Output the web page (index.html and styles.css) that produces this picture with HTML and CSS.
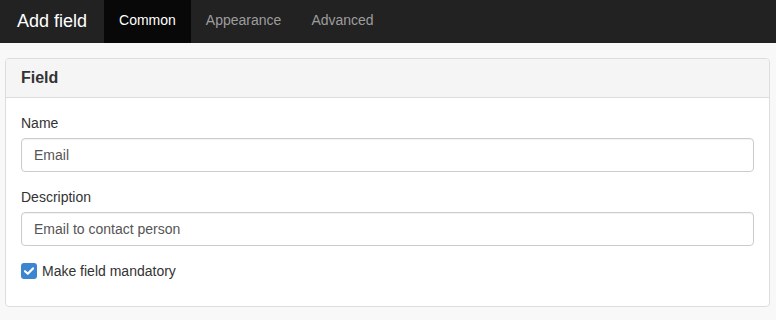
FILE: index.html
```html
<!DOCTYPE html>
<html>
<head>
<meta charset="utf-8">
<link rel="stylesheet" href="styles.css">
</head>
<body>
<nav class="navbar">
  <span class="brand">Add field</span>
  <ul class="tabs">
    <li class="tab active">Common</li>
    <li class="tab">Appearance</li>
    <li class="tab">Advanced</li>
  </ul>
</nav>
<main class="content">
  <section class="panel">
    <div class="panel-heading">Field</div>
    <div class="panel-body">
      <div class="group">
        <label class="label">Name</label>
        <div class="input">Email</div>
      </div>
      <div class="group">
        <label class="label">Description</label>
        <div class="input">Email to contact person</div>
      </div>
      <div class="check">
        <span class="box"><svg width="10" height="8" viewBox="0 0 10 8"><path d="M1 4.2 L3.8 6.8 L9 1.4" fill="none" stroke="#fff" stroke-width="2.2" stroke-linecap="round" stroke-linejoin="round"/></svg></span>
        <span class="check-label">Make field mandatory</span>
      </div>
    </div>
  </section>
</main>
</body>
</html>
```
FILE: styles.css
```css
* { box-sizing: border-box; }
html, body { margin: 0; padding: 0; }
body {
  background: #f8f8f8;
  font-family: "Liberation Sans", Arial, sans-serif;
  font-size: 14px;
  color: #333;
}
.navbar {
  height: 43px;
  background: #222;
  display: flex;
  align-items: stretch;
}
.brand {
  color: #fff;
  font-size: 18px;
  padding: 0 17px 1px 17px;
  display: flex;
  align-items: center;
}
.tabs {
  list-style: none;
  margin: 0;
  padding: 0;
  display: flex;
}
.tab {
  padding: 0 15px 4px 15px;
  display: flex;
  align-items: center;
  color: #9d9d9d;
  font-size: 14px;
}
.tab.active {
  background: #080808;
  color: #fff;
}
.content {
  padding: 15px 6px 0 5px;
}
.panel {
  background: #fff;
  border: 1px solid #ddd;
  border-radius: 4px;
}
.panel-heading {
  background: #f5f5f5;
  border-bottom: 1px solid #ddd;
  border-radius: 3px 3px 0 0;
  height: 39px;
  padding: 0 15px;
  font-size: 16px;
  font-weight: bold;
  color: #333;
  display: flex;
  align-items: center;
}
.panel-body {
  padding: 15px 15px 25px 15px;
}
.group {
  margin-bottom: 15px;
}
.label {
  display: block;
  line-height: 20px;
  margin-bottom: 5px;
}
.input {
  height: 34px;
  border: 1px solid #ccc;
  border-radius: 4px;
  padding: 0 12px;
  display: flex;
  align-items: center;
  color: #555;
  box-shadow: inset 0 1px 1px rgba(0,0,0,0.05);
}
.check {
  display: flex;
  align-items: center;
  gap: 5px;
  height: 20px;
}
.box {
  width: 16px;
  height: 16px;
  border-radius: 3px;
  background: #3c85d0;
  display: flex;
  align-items: center;
  justify-content: center;
}
.check-label {
  color: #333;
}
```
